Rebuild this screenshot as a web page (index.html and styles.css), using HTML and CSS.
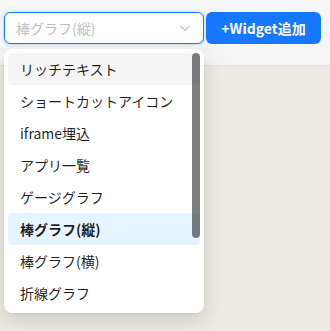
FILE: index.html
```html
<!DOCTYPE html>
<html lang="ja">
<head>
  <meta charset="UTF-8" />
  <meta name="viewport" content="width=device-width, initial-scale=1.0">
  <title>Widget追加</title>
  <link rel="stylesheet" href="styles.css">
</head>
<body>

  <div class="toolbar">
    <div class="select">
      <span class="placeholder">棒グラフ(縦)</span>
      <svg class="arrow" width="12" height="12" viewBox="0 0 12 12">
        <path d="M1.5 4 L6 8.5 L10.5 4" fill="none" stroke="#bfbfbf" stroke-width="1.2" />
      </svg>
    </div>
    <button class="add-btn">+Widget追加</button>
  </div>

  <div class="canvas"></div>

  <div class="dropdown">
    <div class="option active">リッチテキスト</div>
    <div class="option">ショートカットアイコン</div>
    <div class="option">iframe埋込</div>
    <div class="option">アプリ一覧</div>
    <div class="option">ゲージグラフ</div>
    <div class="option selected">棒グラフ(縦)</div>
    <div class="option">棒グラフ(横)</div>
    <div class="option">折線グラフ</div>
    <div class="scroll-thumb"></div>
  </div>

</body>
</html>
```

FILE: styles.css
```css
body {
  margin: 0;
  font-family: "Noto Sans CJK JP", "Noto Sans", sans-serif;
  font-size: 14px;
  color: rgba(0, 0, 0, 0.88);
  background: #efece4;
  height: 331px;
  overflow: hidden;
}

.toolbar {
  display: flex;
  gap: 2px;
  padding: 12px 0 0 4px;
  height: 53px;
  background: #f6f6f6;
  border-bottom: 1px solid #e2e2e2;
}

.select {
  width: 200px;
  height: 32px;
  box-sizing: border-box;
  background: #fff;
  border: 1px solid #1677ff;
  border-radius: 6px;
  box-shadow: 0 0 0 2px rgba(5, 145, 255, 0.1);
  display: flex;
  align-items: center;
  padding: 0 11px;
}

.placeholder {
  flex: 1;
  color: #bfbfbf;
  line-height: 22px;
}

.arrow {
  margin-right: 1px;
}

.add-btn {
  width: 115px;
  height: 32px;
  border: none;
  border-radius: 6px;
  background: #1677ff;
  color: #fff;
  font-family: inherit;
  font-size: 14px;
  font-weight: 600;
  padding: 0;
}

.dropdown {
  position: absolute;
  top: 49px;
  left: 4px;
  width: 200px;
  height: 264px;
  box-sizing: border-box;
  padding: 4px;
  background: #fff;
  border-radius: 8px;
  box-shadow: 0 6px 16px 0 rgba(0, 0, 0, 0.08), 0 3px 6px -4px rgba(0, 0, 0, 0.12), 0 9px 28px 8px rgba(0, 0, 0, 0.05);
  overflow: hidden;
}

.option {
  height: 32px;
  line-height: 22px;
  padding: 5px 12px;
  box-sizing: border-box;
  border-radius: 4px;
  white-space: nowrap;
}

.option.active {
  background: rgba(0, 0, 0, 0.04);
}

.option.selected {
  background: #e6f4ff;
  font-weight: 600;
}

.scroll-thumb {
  position: absolute;
  top: 4px;
  right: 4px;
  width: 8px;
  height: 185px;
  border-radius: 4px;
  background: rgba(0, 0, 0, 0.5);
}
```
